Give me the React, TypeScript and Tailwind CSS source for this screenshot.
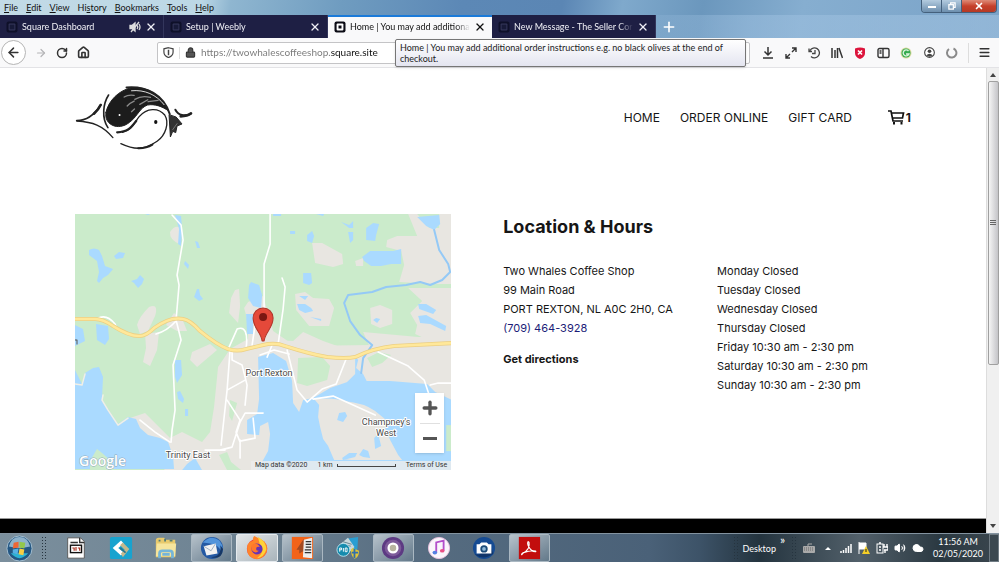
import React from "react";
import { ArrowLeft, ArrowRight, RotateCw, House, Lock, X, Plus, Menu, Volume2, Cloud } from "lucide-react";

type Pt = string;

const waterBlue = "#aadaff";

function SquareMark({ dim }: { dim?: boolean }) {
  return (
    <svg viewBox="0 0 12 12" className="size-3 shrink-0" aria-hidden="true">
      <rect x=".5" y=".5" width="11" height="11" rx="2" fill={dim ? "#0e1029" : "#0b0b14"} />
      <rect x="2.6" y="2.6" width="6.8" height="6.8" rx="1" fill={dim ? "#34365a" : "#fff"} />
      <rect x="3.6" y="3.6" width="4.8" height="4.8" fill={dim ? "#171a38" : "#fff"} />
      {!dim && <rect x="4.5" y="4.5" width="3" height="3" fill="#0b0b14" />}
    </svg>
  );
}

function Tab({ title, active, muted }: { title: string; active?: boolean; muted?: boolean }) {
  return (
    <div
      className={
        active
          ? "flex h-full min-w-0 flex-1 max-w-[164px] items-center gap-1 border-t-2 border-[#1a7ad9] bg-[#f9f9fa] px-[6px] pb-[2px] text-[#111]"
          : "flex h-full min-w-0 flex-1 max-w-[164px] items-center gap-1 border-r border-[#33365c] bg-[#1e1f44] px-[6px] text-[#f0f0f6]"
      }
    >
      <SquareMark dim={!active} />
      <span className="min-w-0 flex-1 overflow-hidden text-[9px] whitespace-nowrap [mask-image:linear-gradient(to_right,black_88%,transparent)]">{title}</span>
      {muted && (
        <svg viewBox="0 0 12 12" className="size-3 shrink-0" fill="none" stroke="#ddd" strokeWidth="1.300" aria-hidden="true">
          <path d="M1 4.500h2L6 2v8L3 7.500H1z" fill="#ddd" />
          <path d="M8 4.500q1.500 1.500 0 3.500M10 3q2 3 0 6M2 11 10 1" />
        </svg>
      )}
      <button aria-label={"Close " + title} className="shrink-0">
        <X className="size-3" strokeWidth={2.6} />
      </button>
    </div>
  );
}

function TitleBar() {
  const menus = ["File", "Edit", "View", "History", "Bookmarks", "Tools", "Help"];
  const keys = [0, 0, 0, 2, 0, 0, 0];
  return (
    <div className="bg-[linear-gradient(100deg,#c2dae6_0%,#bcd8e6_20%,#8fb6d0_23%,#6f9cc0_34%,#5c88b6_46%,#5b86b4_56%,#7fa9cc_62%,#6b97bd_70%,#86aed0_80%,#7aa3c8_100%)]">
      <div className="flex h-[15px] items-center justify-between">
        <nav className="flex h-full items-center gap-2 pl-1 text-[9px] leading-none text-[#111]">
          {menus.map((m, i) => (
            <button key={m}>
              {m.slice(0, keys[i])}
              <u>{m[keys[i]]}</u>
              {m.slice(keys[i] + 1)}
            </button>
          ))}
        </nav>
        <div className="mr-[2px] flex h-[13px] self-start overflow-hidden rounded-b border border-t-0 border-[#44607c] text-white">
          <button aria-label="Minimize" className="flex w-5 items-end justify-center border-r border-[#44607c] bg-linear-to-b from-[#b3cbdf] to-[#6d8fae] pb-1">
            <span className="h-[2px] w-2 bg-white" />
          </button>
          <button aria-label="Restore" className="flex w-5 items-center justify-center border-r border-[#44607c] bg-linear-to-b from-[#b3cbdf] to-[#6d8fae]">
            <svg viewBox="0 0 9 9" className="size-2" fill="none" stroke="#fff" strokeWidth="1.4"><path d="M3 3V1h5v5H6" /><rect x="1" y="3" width="5" height="5" /></svg>
          </button>
          <button aria-label="Close window" className="flex w-[34px] items-center justify-center bg-linear-to-b from-[#dd8a77] via-[#c6402a] to-[#b53a25]">
            <X className="size-[10px]" strokeWidth={4} />
          </button>
        </div>
      </div>
      <div className="flex h-[23px] items-center bg-[linear-gradient(to_right,transparent_60%,#9cbfdf88_75%,#a5c6e388)]">
        <Tab title="Square Dashboard" muted />
        <Tab title="Setup | Weebly" />
        <Tab title="Home | You may add additiona" active />
        <Tab title="New Message - The Seller Cor" />
        <button aria-label="New tab" className="ml-[5px] text-white">
          <Plus className="size-4" strokeWidth={2.4} />
        </button>
      </div>
    </div>
  );
}

function ToolIcon({ label, children }: { label: string; children: React.ReactNode }) {
  return (
    <button aria-label={label} className="flex size-[14px] items-center justify-center">
      {children}
    </button>
  );
}

function Toolbar() {
  return (
    <div className="relative flex h-[30px] items-center border-b border-[#e3e3e6] bg-[#f9f9fa] text-[#333]">
      <div className="flex w-[157px] items-center gap-[9px] pl-[1px]">
        <button aria-label="Back" className="flex size-[25px] items-center justify-center rounded-full border border-[#b5b5b5] bg-white">
          <ArrowLeft className="size-[15px]" strokeWidth={2.4} />
        </button>
        <button aria-label="Forward" disabled className="text-[#b4b4b6]"><ArrowRight className="size-3" strokeWidth={2.4} /></button>
        <button aria-label="Reload"><RotateCw className="size-3" strokeWidth={3} /></button>
        <button aria-label="Home"><House className="size-[13px]" strokeWidth={3} /></button>
      </div>
      <div className="flex h-[22px] min-w-0 flex-1 items-center gap-[5px] rounded-xs border border-[#c4c4c6] bg-white px-[5px]">
        <svg viewBox="0 0 12 12" className="size-[11px] shrink-0" fill="none" stroke="#444" strokeWidth="1.3"><path d="M6 .8 11 2v3.500c0 3-2 5-5 6-3-1-5-3-5-6V2z" /><path d="M6 3v2M6 5v4" strokeWidth="1.6" /></svg>
        <span className="h-3 w-px bg-[#ddd]" />
        <Lock className="size-[11px] shrink-0 fill-[#555]" strokeWidth={2.4} />
        <input
          aria-label="Address"
          defaultValue="https://twowhalescoffeeshop.square.site"
          className="min-w-0 flex-1 bg-[linear-gradient(to_right,#777_130px,#111_130px)] bg-clip-text text-[10px] text-transparent outline-none"
        />
      </div>
      <div className="ml-[11px] flex items-center gap-[9px]">
        <ToolIcon label="Downloads">
          <svg viewBox="0 0 12 13" className="h-[13px] w-3" fill="none" stroke="#333" strokeWidth="1.500"><path d="M6 1v8M2.500 5.500 6 9l3.500-3.500M1 12h10" /></svg>
        </ToolIcon>
        <ToolIcon label="Full screen">
          <svg viewBox="0 0 12 12" className="size-3" fill="none" stroke="#333" strokeWidth="1.4"><path d="M7 1h4v4M11 1 7 5M5 11H1V7M1 11l4-4" /></svg>
        </ToolIcon>
        <ToolIcon label="History">
          <svg viewBox="0 0 13 12" className="h-3 w-[13px]" fill="none" stroke="#444" strokeWidth="1.300"><path d="M2 3.500A5 5 0 1 1 3 9.500M1 1.500v3h3M7 3v3.500H4" /></svg>
        </ToolIcon>
        <ToolIcon label="Library">
          <svg viewBox="0 0 12 12" className="size-3" fill="none" stroke="#333" strokeWidth="1.5"><path d="M1 1v10M4 3v8M6.500 1v10M8 1l3.500 10" /></svg>
        </ToolIcon>
        <ToolIcon label="Security">
          <svg viewBox="0 0 12 12" className="size-3"><path d="M1 1.500Q6-.5 11 1.500V6q0 4-5 6-5-2-5-6z" fill="#dc143c" /><path d="m4 3.500 4 4m0-4-4 4" stroke="#fff" strokeWidth="1.7" /></svg>
        </ToolIcon>
        <ToolIcon label="Sidebars">
          <svg viewBox="0 0 13 12" className="h-3 w-[13px]" fill="none" stroke="#333" strokeWidth="1.4"><rect x="1" y="1.500" width="11" height="9" rx="1.500" /><path d="M6 1.500v9M2.500 4h2M2.500 6h2" /></svg>
        </ToolIcon>
        <ToolIcon label="Web of trust">
          <svg viewBox="0 0 12 12" className="size-3"><circle cx="6" cy="6" r="5.500" fill="#d9d9a0" /><circle cx="6" cy="6" r="4.500" fill="#35ab4f" /><path d="M8.500 4A3 3 0 1 0 9 7H6" fill="none" stroke="#dff5de" strokeWidth="1.300" /></svg>
        </ToolIcon>
        <ToolIcon label="Account">
          <svg viewBox="0 0 12 12" className="size-[11px]"><circle cx="6" cy="6" r="5.300" fill="#fff" stroke="#444" strokeWidth="1.200" /><circle cx="6" cy="4.600" r="2" fill="#444" /><path d="M2.500 9q3.500-3.500 7 0-3.500 3-7 0" fill="#444" /></svg>
        </ToolIcon>
        <ToolIcon label="Sync">
          <svg viewBox="0 0 12 12" className="size-3" fill="none" stroke="#8a8a8a" strokeWidth="2"><path d="M7.500 1.500a4.700 4.700 0 1 1-4.500.5" /></svg>
        </ToolIcon>
      </div>
      <span className="ml-[9px] h-5 w-px bg-[#ddd]" />
      <button aria-label="Open menu" className="mr-2 ml-[9px]"><Menu className="size-[13px]" strokeWidth={2.8} /></button>
      <div role="tooltip" className="absolute top-[1px] left-[395px] h-7 w-[351px] rounded-xs border border-[#767676] bg-linear-to-b from-white to-[#e4e5f0] px-1 pt-[2px] text-[9px] leading-[11px] text-[#222] shadow-sm">
        Home | You may add additional order instructions e.g. no black olives at the end of checkout.
      </div>
    </div>
  );
}

function WhaleLogo() {
  return (
    <svg viewBox="45 30 355 195" className="h-[65px] w-[118px]" role="img" aria-label="Two Whales Coffee Shop" fill="none" stroke="#222" strokeLinecap="round">
      <path d="M138 112C146 76 178 45 215 38c50-5 92 25 112 70-20-14-42-22-64-18-22 8-30 32-48 47-16 15-35 21-52 16-20-7-28-22-25-41Z" fill="#1c1c1c" strokeWidth="3" />
      <path d="M200 37c60-5 112 22 130 80" strokeWidth="6" />
      <path d="M215 47c40-4 75 12 98 42" stroke="#ddd" strokeWidth="3" />
      <path d="M193 66c12-8 22-6 30-5M225 73c14-9 32-10 47-6M202 93c7-9 14-12 21-15M240 88l24-14M215 110l9-8M265 80l30-4" stroke="#8a8a8a" strokeWidth="4" />
      <circle cx="179" cy="120" r="3" fill="#fff" stroke="none" />
      <path d="M170 172c46 1 49-27 68-47 23-27 58-28 77-5 15 24 2 62-23 79-16 11-34 20-57 21-20 0-37-7-52-14" fill="#fff" stroke="none" />
      <path d="M188 172c30-6 34-28 50-47 23-27 58-28 77-5 15 24 2 62-23 79-16 11-34 20-57 21-20 0-37-7-52-14" strokeWidth="4" />
      <path d="M172 172c34-2 42-15 57-34" strokeWidth="7" />
      <path d="M278 209q-20 12-43 11" strokeWidth="6" />
      <ellipse cx="288" cy="141" rx="5" ry="6" fill="#111" stroke="none" />
      <path d="M146 60c-16 25-22 68-2 98" strokeWidth="5" />
      <path d="M50 137c34 0 55-20 73-48" strokeWidth="5" />
      <path d="M122 90q-7 15-20 26" strokeWidth="8" />
      <path d="M51 138c47 3 77 13 108 50" strokeWidth="4" />
      <path d="m328 120 4 66 7-17 9 4 4-20 15-6-17-20z" fill="#333" strokeWidth="3" />
      <path d="M347 104c9 18 28 21 47 12" strokeWidth="6" />
      <path d="M363 124c13 0 24-3 31-9" strokeWidth="8" />
      <path d="m339 164 13-18" stroke="#999" strokeWidth="2" />
    </svg>
  );
}

function CartIcon() {
  return (
    <svg viewBox="0 0 17 15" className="h-[15px] w-[17px]" fill="none" stroke="#111" strokeWidth="1.700" aria-hidden="true">
      <path d="M0 1h3l2 10H15M3.500 3H15.500L14.500 8H5" />
      <path d="M6 12v2.500M13.500 12v2.500" strokeWidth="2" />
    </svg>
  );
}

const lakes: Pt[] = [
  "M89 250q5-3 10 0l3 6 3 10 8 3-5 6-5 3-4 5-2-2 2-9-2-11-8-6z",
  "M114 256l5-4 6 1-2 5-7 1z",
  "M131 281l6-2 3-4 4 4-2 5-4 4-4-5z",
  "M175 215l6 1 1 12-1 18-3-2 1-15z",
  "M195 241l3 1 2 6-3 0zM185 261l4 4-1 4-4-5z",
  "M197 289l2 0 1 6 3 4-4 2-5-4z",
  "M249 285l2-3 8 3 3 10-1 13-8-2-5-8z",
  "M246 314l7 0 0 20-6 0z",
  "M75 325l8 4 2 12-10 5z",
  "M96 324l12 2 1 13-4 6-8-5z",
  "M341 222l8 3 4-4v7l-4 0z",
  "M307 235l5-4 2 5-2 7-5-2zM290 231h5v3h-5z",
  "M348 232h5v8l-3 3zM366 228l7-5 6 1-3 11-1 6-9-1z",
  "M362 257l8-6h23l8-2v15l-10 0-10 2-10 0-7-5z",
  "M303 273l8 0 1 10-3 2-6-2z",
  "M417 217l22-2 1 9-6 6-8-4z",
  "M299 296h9l-3 4zM297 304l8 0 6 4 2 3-8 2-6-3zM310 317l11 2 0 2z",
  "M418 304h8l10 6-3 4-14-5zM418 316l8-1 20 11-1 5-15-7-10-1z",
  "M376 318l4 1-3 4-4-3zM175 360l6 0 1 15-5 8-2-6z",
  "M177 392l3-1 4 8-1 4-5-4zM185 409h3v7h-3z",
  "M273 214h8v2h-8zM316 214h8l-1 2zM145 214h5l-2 1z",
];

const landPatches: Pt[] = [
  "M170 232q5-8 11-4v17q-12-5-11-13z",
  "M137 325q2-8 12-18 10-4 6 9l-7 15-8 3z",
  "M145 334l14-2-2 18-7 16-7-4 3-14z",
  "M231 298l4-8 4-1 1 17-2 17-9-10z",
  "M166 325l8-12 9 8 4 10-10 0z",
  "M192 352l18-8 7 6-20 17-7-7z",
  "M312 243l10 0 20 11 1 10-10 3-18-4z",
  "M387 240l10-4 20 0-9-22h9l12 14h10l0-14h14v70l-18 0-36-2 5-17-3-14-15-4zM355 261l8-3 0 8-7 0z",
  "M295 294l10-2 8 6 16 1 5 9-5 18-20 0-13-16z",
  "M370 308l10-3 12 5 0 14-12 4-9-4z",
  "M408 288h44v57l-22-4-15-7 2-9-7-12 12-12z",
  "M268 340l25 1 10-9 20 9 17 6-10 8-60 2zM363 332l55 5 34 0v10l-52 2-30-1z",
];

function TownMap() {
  return (
    <div className="relative w-[45%] shrink-0 self-start overflow-hidden">
      <svg viewBox="75 214 376 256" className="block w-full" role="img" aria-label="Map of Port Rexton" fill="none" strokeLinejoin="round" strokeLinecap="round">
        <rect x="75" y="214" width="377" height="256" fill="#cbebcb" />
        <g fill="#e8e6e1">
          {landPatches.map((d) => <path key={d} d={d} />)}
          <path d="M248 302l15-6 10 35 22 15 157-2v126H165l-15-15-20-37 15-5 25 25 12-6 20 10 8-10 4-25 4-40 12-18 18-10 0-17-4-14z" />
        </g>
        <g fill="#cbebcb">
          <path d="M298 358l24-1 8 9-3 14-20 6-10-3zM367 358l12-6 12 3-9 8-10 4zM230 400l7 3-5 18-3-5zM219 455l8-3 4 10 10 8h-14z" />
        </g>
        <g fill={waterBlue}>
          {lakes.map((d) => <path key={d} d={d} />)}
          <path d="M75 370l7 14 3-11 8-5 6-1 4 10-1 22 6 10 10 15 10-7 8 2 4 9 8 7 12 3 8 4 5 14 1 13H75z" />
          <path d="M182 470l5-6 8-6 7 12z" />
          <path d="M258 357l15-4 13 8 6 20 1 22 6 9 4-12 10-2 17-10 20-7h40l37 3 8 8 17 8v80H258l-1-9 11-20 2-17-2-12-8 4-1 9-12-1 0-14 10-6 2-15z" />
          <path d="M355 356l3 4-2 8 7 6 4 8h-20l8-8 0-10z" />
        </g>
        <path d="M314 399q20-2 30 2 20 2 31 10l11 9-1 8 5 12 8 15 4 5h-68l-6-14-5-7-3-12-2-10 1-12z" fill="#e8e6e1" />
        <path d="M339 413l6-1 2 4-4 6-6-2zM342 458l7-5 8 0-2 4-12 3zM359 455l4-6 5 2 2 7-7-1zM374 438l4-4 3 12-6 3z" fill={waterBlue} />
        <path d="M257 464h76q8-6 18-4h50l51 3v7H257z" fill={waterBlue} />
        <path d="M446 425h6v26h-6z" fill="#cbebcb" />
        <path d="M90 461l7-12 5 4 9 8 3 9H90z" fill="#cbebcb" />
        <path d="M75 384l7 1 3-11M103 395l-1 5 6 10 10 15 10-7" stroke="#f1efe6" strokeWidth="1.500" />
        <path d="M434 230l2 8 3 12 9 14 2 8-8 8-12 5-10-3-14 3-20 2-14 5-24 3-4 8 6 18 10 14 12 10-9 13-2 15" stroke="#94c9f6" strokeWidth="2" />
        <g stroke="#fff" strokeWidth="1.600">
          <path d="M172 215l9 10 2 15-6 35 2 10-3 35 5 20-8 25 2 45-3 20-1 12M176 321q-9 10-20 13M97 319q9-6 18 5l2 5" />
          <path d="M270 214l0 30-6 20 0 45 0 30M282 278l3 9-2 22-5 35M229 347l8-18q12-5 9 20M232 350v10l10 5 5 20-2 20" />
          <path d="M230 350l-3 40-6 55M227 400l13 20-4 12 4 10M220 450l12-3 8-25 5-9h18M227 390l18-10M240 441l15-3-2-20M240 440v18M140 420l15 12 15 10M205 450h20" />
          <path d="M287 350l10 40 10 12 15-13 14-5 10-25M378 352l30 14 16 14 5 15M313 399l20-3 20 9 22 10M260 355l14-5 15 4M430 385l8-2h14M255 325l-3 20M272 345l-5 12" />
        </g>
        <path d="M75 319h20q8 0 18 7 16 10 26 10 7 0 15-8 17-12 29-9 7 1 17 12 17 14 28 18 9 3 18 0l17-4q12-3 22 1 25 8 42 11 19 2 28 0 19-9 39-11l58-3" stroke="#eccf83" strokeWidth="4" />
        <path d="M75 319h20q8 0 18 7 16 10 26 10 7 0 15-8 17-12 29-9 7 1 17 12 17 14 28 18 9 3 18 0l17-4q12-3 22 1 25 8 42 11 19 2 28 0 19-9 39-11l58-3" stroke="#ffe89a" strokeWidth="2.600" />
        <path d="M75 340h2v4" stroke="#555" strokeWidth="1" />
        <path d="M262 341c-1-9-9-13-9-23a10 10 0 0 1 20 0c0 10-8 14-9 23z" fill="#e5493a" stroke="#b0352a" strokeWidth="1" />
        <circle cx="263" cy="317" r="4" fill="#7b1712" />
        <g fill="#4a4a4a" stroke="#fff" strokeWidth="2" paintOrder="stroke" className="font-['Roboto',sans-serif] text-[9px]" textAnchor="middle">
          <text x="269" y="376">Port Rexton</text>
          <text x="188" y="458">Trinity East</text>
          <text x="386" y="425">Champney's</text>
          <text x="386" y="436">West</text>
        </g>
        <text x="79" y="466" fill="#fff" stroke="#8fa8b8" strokeWidth="1" paintOrder="stroke" className="font-['Open_Sans',sans-serif] text-[14px] font-semibold">Google</text>
      </svg>
      <div className="absolute right-0 bottom-0 flex h-[9px] items-center gap-[10px] bg-[#ececec]/80 px-1 font-['Roboto',sans-serif] text-[7px] leading-none text-[#333]">
        <span>Map data ©2020</span>
        <span className="flex items-center gap-1">1 km <i className="h-[3px] w-[59px] border border-t-0 border-[#444]" /></span>
        <a href="#terms">Terms of Use</a>
      </div>
      <div className="absolute right-[7px] bottom-[17px] flex w-[29px] flex-col items-center bg-white text-[#555] shadow">
        <button aria-label="Zoom in" className="flex h-[30px] items-center"><Plus className="size-5" strokeWidth={4} /></button>
        <span className="h-px w-5 bg-[#e0e0e0]" />
        <button aria-label="Zoom out" className="flex h-[29px] items-center"><span className="h-[3px] w-[14px] bg-[#555]" /></button>
      </div>
    </div>
  );
}

const hours = [
  "Monday Closed", "Tuesday Closed", "Wednesday Closed", "Thursday Closed",
  "Friday 10:30 am - 2:30 pm", "Saturday 10:30 am - 2:30 pm", "Sunday 10:30 am - 2:30 pm",
];

function ShopPage() {
  return (
    <div className="flex min-w-0 flex-1 flex-col bg-white font-['Inter',sans-serif] text-[#161616]">
      <header className="flex items-center justify-between px-[75px] pt-[17px]">
        <a href="#top"><WhaleLogo /></a>
        <nav className="flex items-center gap-5 text-[12px]">
          <a href="#home">HOME</a>
          <a href="#order">ORDER ONLINE</a>
          <a href="#gift">GIFT CARD</a>
          <a href="#cart" aria-label="Cart, 1 item" className="ml-4 flex items-center gap-px font-bold"><CartIcon />1</a>
        </nav>
      </header>
      <main className="flex gap-[52px] px-[75px] pt-16">
        <TownMap />
        <section className="min-w-0 flex-1">
          <h1 className="pt-px text-[18px] leading-6 font-bold">Location &amp; Hours</h1>
          <div className="mt-[23px] grid grid-cols-2 gap-5 text-[11px] leading-[19px]">
            <address className="whitespace-nowrap not-italic">
              Two Whales Coffee Shop<br />
              99 Main Road<br />
              PORT REXTON, NL A0C 2H0, CA<br />
              <a href="tel:7094643928" className="text-[#1c1c78]">(709) 464-3928</a>
              <a href="#directions" className="mt-3 block font-bold">Get directions</a>
            </address>
            <ul className="whitespace-nowrap">
              {hours.map((h) => <li key={h}>{h}</li>)}
            </ul>
          </div>
        </section>
      </main>
      <footer className="mt-auto h-[15px] border-t border-[#999] bg-black" />
    </div>
  );
}

function Scrollbar() {
  return (
    <div className="flex w-[13px] shrink-0 flex-col items-center border-l border-[#ddd] bg-[#f0f0f0]">
      <button aria-label="Scroll up" className="flex h-[13px] items-center"><span className="border-x-3 border-b-4 border-x-transparent border-b-[#444]" /></button>
      <div className="flex h-[61%] w-[11px] flex-col items-center justify-center gap-[1px] rounded-xs border border-[#a0a0a0] bg-linear-to-r from-[#f5f5f5] to-[#c4c4c8]">
        <i className="h-px w-[6px] bg-[#666]" />
        <i className="h-px w-[6px] bg-[#666]" />
        <i className="h-px w-[6px] bg-[#666]" />
      </div>
      <button aria-label="Scroll down" className="mt-auto flex h-[14px] items-center"><span className="border-x-3 border-t-4 border-x-transparent border-t-[#444]" /></button>
    </div>
  );
}

const apps: { name: string; open?: boolean; bright?: boolean; art: React.ReactNode }[] = [
  { name: "Batch file", art: <><path d="M4 2h14l4 4v18H4z" fill="#fff" stroke="#555" /><path d="M17 2v5h5M7 7h8" fill="none" stroke="#333" strokeWidth="1.500" /><rect x="7" y="10" width="12" height="8" fill="#fff" stroke="#111" strokeWidth="1.500" /><path d="M9 13h2v3M13 12v4M15 13h2v3" fill="none" stroke="#a32" strokeWidth="1.300" /></> },
  { name: "Remote", art: <><rect x="1" y="1" width="24" height="24" rx="2" fill="#18a3cf" /><path d="M13 5 4 13l9 8 3-3-6-5 6-5z" fill="#fff" /><path d="m15 7 7 7-7 9-2-4 4-4-5-5z" fill="#c3b88d" /><path d="m12 13 6 5" stroke="#28768e" strokeWidth="2" /></> },
  { name: "Explorer", art: <><path d="M2 5q0-3 3-3h6l2 2h10v19H2z" fill="#e8ca6d" /><path d="M3 8h21l-1 14H2z" fill="#f6e59d" /><path d="M5 4h2v2H5zM11 3h2v3h-2zM17 4h3v2h-3z" fill="#567e74" /><path d="M6 24v-5q0-3 3-3h8q3 0 3 3v5M9 20h8" fill="none" stroke="#75b5d8" strokeWidth="3" /></> },
  { name: "Thunderbird", open: true, art: <><circle cx="13" cy="13" r="12" fill="#2459a3" /><path d="M3 7Q12-2 21 5q5 6 3 13-4-9-13-10z" fill="#5294db" /><path d="m4 11 13-3 2 11-12 2z" fill="#f2f2f2" /><path d="m4 11 8 5 5-8" fill="none" stroke="#9aaabe" /><path d="M22 10q2 12-10 13 12 3 13-9" fill="#173765" /></> },
  { name: "Firefox", open: true, bright: true, art: <><circle cx="13" cy="14" r="11" fill="#f33a37" /><path d="M3 9Q5 6 9 5q-1-3 1-5 6 3 11 6 6 7 1 14-8 9-17 2-4-5-2-13" fill="#ff842a" /><path d="M14 1q9 4 9 14-3 9-10 9 10-8 3-15z" fill="#ffd337" /><circle cx="13" cy="14" r="6" fill="#6634b5" /><path d="M7 10q6-4 9 2-4-1-4 2 0 2 3 2-4 4-8-1z" fill="#ff782a" /></> },
  { name: "Reader", open: true, art: <><rect x="2" y="1" width="23" height="24" fill="#f26319" /><path d="m15 3-8 12 3 0v4l5-3z" fill="#a34a22" /><path d="m15 4 9-2v22l-10-1z" fill="#eee" /><path d="M17 6h6M17 9h6M17 12h6M16 15h7M16 18h7" stroke="#333" strokeWidth="1.300" /></> },
  { name: "Tools", art: <><path d="m11 3 13-2-1 15-11 1z" fill="#2a9ed2" /><path d="m3 10 10-8 7 10-8 8-9-3z" fill="#c9d8dc" /><path d="m4 9 12 2M7 6l10 3" stroke="#61818d" /><circle cx="8" cy="15" r="7" fill="#168bad" stroke="#b9e1eb" /><path d="M4 17v-4h2v2H4M8 17v-4M10 13h2v4h-2z" fill="none" stroke="#fff" strokeWidth="1" /><path d="m18 13 7 3q0 7-5 9-4-4-4-10z" fill="#e2c539" /><path d="M20 14v10M17 18h7" stroke="#3270ad" strokeWidth="2" /></> },
  { name: "Tor", open: true, art: <><circle cx="13" cy="13" r="12" fill="#5d3a83" /><circle cx="13" cy="13" r="9" fill="#7d5a99" /><circle cx="13" cy="13" r="6" fill="#fff" /><circle cx="13" cy="13" r="3.500" fill="#b8b49f" /></> },
  { name: "iTunes", art: <><circle cx="13" cy="13" r="11.500" fill="#faf5fb" stroke="#e6bfdc" /><path d="M10 18V7l8-2v11" fill="none" stroke="#b34fcb" strokeWidth="2" /><ellipse cx="8.500" cy="18" rx="2.500" ry="2" fill="#5580e2" /><ellipse cx="16.500" cy="16" rx="2.500" ry="2" fill="#e94f84" /></> },
  { name: "Camera", art: <><circle cx="13" cy="13" r="12" fill="#164b92" /><path d="M3 20Q13 27 23 19l-4-10-11 11z" fill="#103569" /><path d="M5 9h3l2-2h6l2 2h3v10H5z" fill="#fff" /><circle cx="13" cy="14" r="4" fill="#1b4b79" /><circle cx="13" cy="14" r="2" fill="#91b9d8" /></> },
  { name: "Acrobat", open: true, art: <><rect x="2" y="1" width="23" height="24" fill="#c20d0d" /><path d="M6 19c6-3 8-8 7-12-1-2-2 0-1 3 2 5 5 7 8 7 2-1-4-2-13 1-3 2-2 3-1 1" fill="none" stroke="#fff" strokeWidth="1.300" /></> },
];

function Grip() {
  return <span className="h-6 w-[6px] bg-[radial-gradient(#26343f_1px,transparent_1px)] bg-[size:3px_3px]" />;
}

function Taskbar() {
  return (
    <div className="flex h-[29px] shrink-0 items-center justify-between border-t border-[#8393a0] bg-[linear-gradient(to_right,#7b8f9d_0%,#6d8292_25%,#566c80_42%,#4a6178_65%,#3d5368_70%,#24343f_76%,#52606a_86%,#2b3942_94%,#3a464e_100%)] text-white">
      <div className="flex h-full items-center">
        <button aria-label="Start" className="pl-[6px]">
          <svg viewBox="0 0 28 28" className="size-[27px]">
            <circle cx="14" cy="14" r="13" fill="#245783" stroke="#a4bed0" />
            <path d="M3 12Q5 2 14 2t11 10q-11 3-22 0" fill="#8eb2cb" />
            <path d="M5 19q9 10 18 0" fill="#2cb2d4" />
            <path d="m8 8 5-1v6l-6 1z" fill="#ee6635" /><path d="m14 7 6 1-1 6-5-1z" fill="#93c74a" /><path d="m7 15 6-1-1 6-5-1z" fill="#56b1e4" /><path d="m14 14 5 1-1 6-5-1z" fill="#f7ce42" />
          </svg>
        </button>
        <span className="ml-2 flex"><Grip /></span>
        <div className="ml-[6px] grid h-full w-[499px] grid-cols-11">
          {apps.map((a) => (
            <button
              key={a.name}
              aria-label={a.name}
              className={
                a.bright
                  ? "mx-[2px] flex items-center justify-center rounded-xs border border-[#e5eaee] bg-linear-to-br from-[#e2e6e8] to-[#a9b4bb]"
                  : a.open
                    ? "mx-[2px] flex items-center justify-center rounded-xs border border-[#aab8c2] bg-linear-to-br from-[#b7c2cb] to-[#63798a]"
                    : "mx-[2px] flex items-center justify-center"
              }
            >
              <svg viewBox="0 0 26 26" className="size-6">{a.art}</svg>
            </button>
          ))}
        </div>
      </div>
      <div className="flex h-full items-center text-[9px] leading-none">
        <Grip />
        <span className="ml-1">Desktop</span>
        <button aria-label="More" className="mb-4 ml-1 text-[12px]">»</button>
        <span className="ml-[6px] flex"><Grip /></span>
        <svg viewBox="0 0 12 10" className="ml-[6px] h-[10px] w-3"><path d="M5 3V1h4" fill="none" stroke="#aaa" /><rect y="3" width="12" height="7" rx="1" fill="#aaa" /><path d="M1 5h10M1 7h10" stroke="#666" strokeDasharray="1 1" /></svg>
        <button aria-label="Show hidden icons" className="ml-[10px] border-x-3 border-b-3 border-x-transparent border-b-white" />
        <svg viewBox="0 0 12 10" className="ml-[9px] h-[10px] w-3"><path d="M1 10V8M3.500 10V7M6 10V5M8.500 10V3M11 10V1" stroke="#fff" strokeWidth="1.500" /></svg>
        <svg viewBox="0 0 12 12" className="ml-[6px] size-3"><path d="M1 0v12M1 1h7v6H1" stroke="#fff" fill="#fff" /><path d="m8 4 4 8H4z" fill="#f5cf27" /><path d="M8 7v3" stroke="#222" /></svg>
        <svg viewBox="0 0 12 12" className="ml-[6px] size-3" fill="none" stroke="#fff"><rect x="1" y="2" width="6" height="9" /><path d="M3 1h2M3 5h2M3 8h2M8 2v3M11 2v3M7 5h5v3H8M9 8v3" strokeWidth="1.400" /></svg>
        <Volume2 className="ml-[6px] size-3 fill-white" />
        <Cloud className="ml-[6px] size-3 fill-white" />
        <time className="ml-[9px] text-center leading-[12px]">11:56 AM<br />02/05/2020</time>
        <button aria-label="Show desktop" className="ml-[6px] h-full w-[10px] border border-[#6f7b83] bg-[#3b4850]" />
      </div>
    </div>
  );
}

export default function App() {
  return (
    <div className="flex h-screen flex-col overflow-hidden font-['Lato','Open_Sans',sans-serif]">
      <TitleBar />
      <Toolbar />
      <div className="flex min-h-0 flex-1">
        <ShopPage />
        <Scrollbar />
      </div>
      <Taskbar />
    </div>
  );
}
